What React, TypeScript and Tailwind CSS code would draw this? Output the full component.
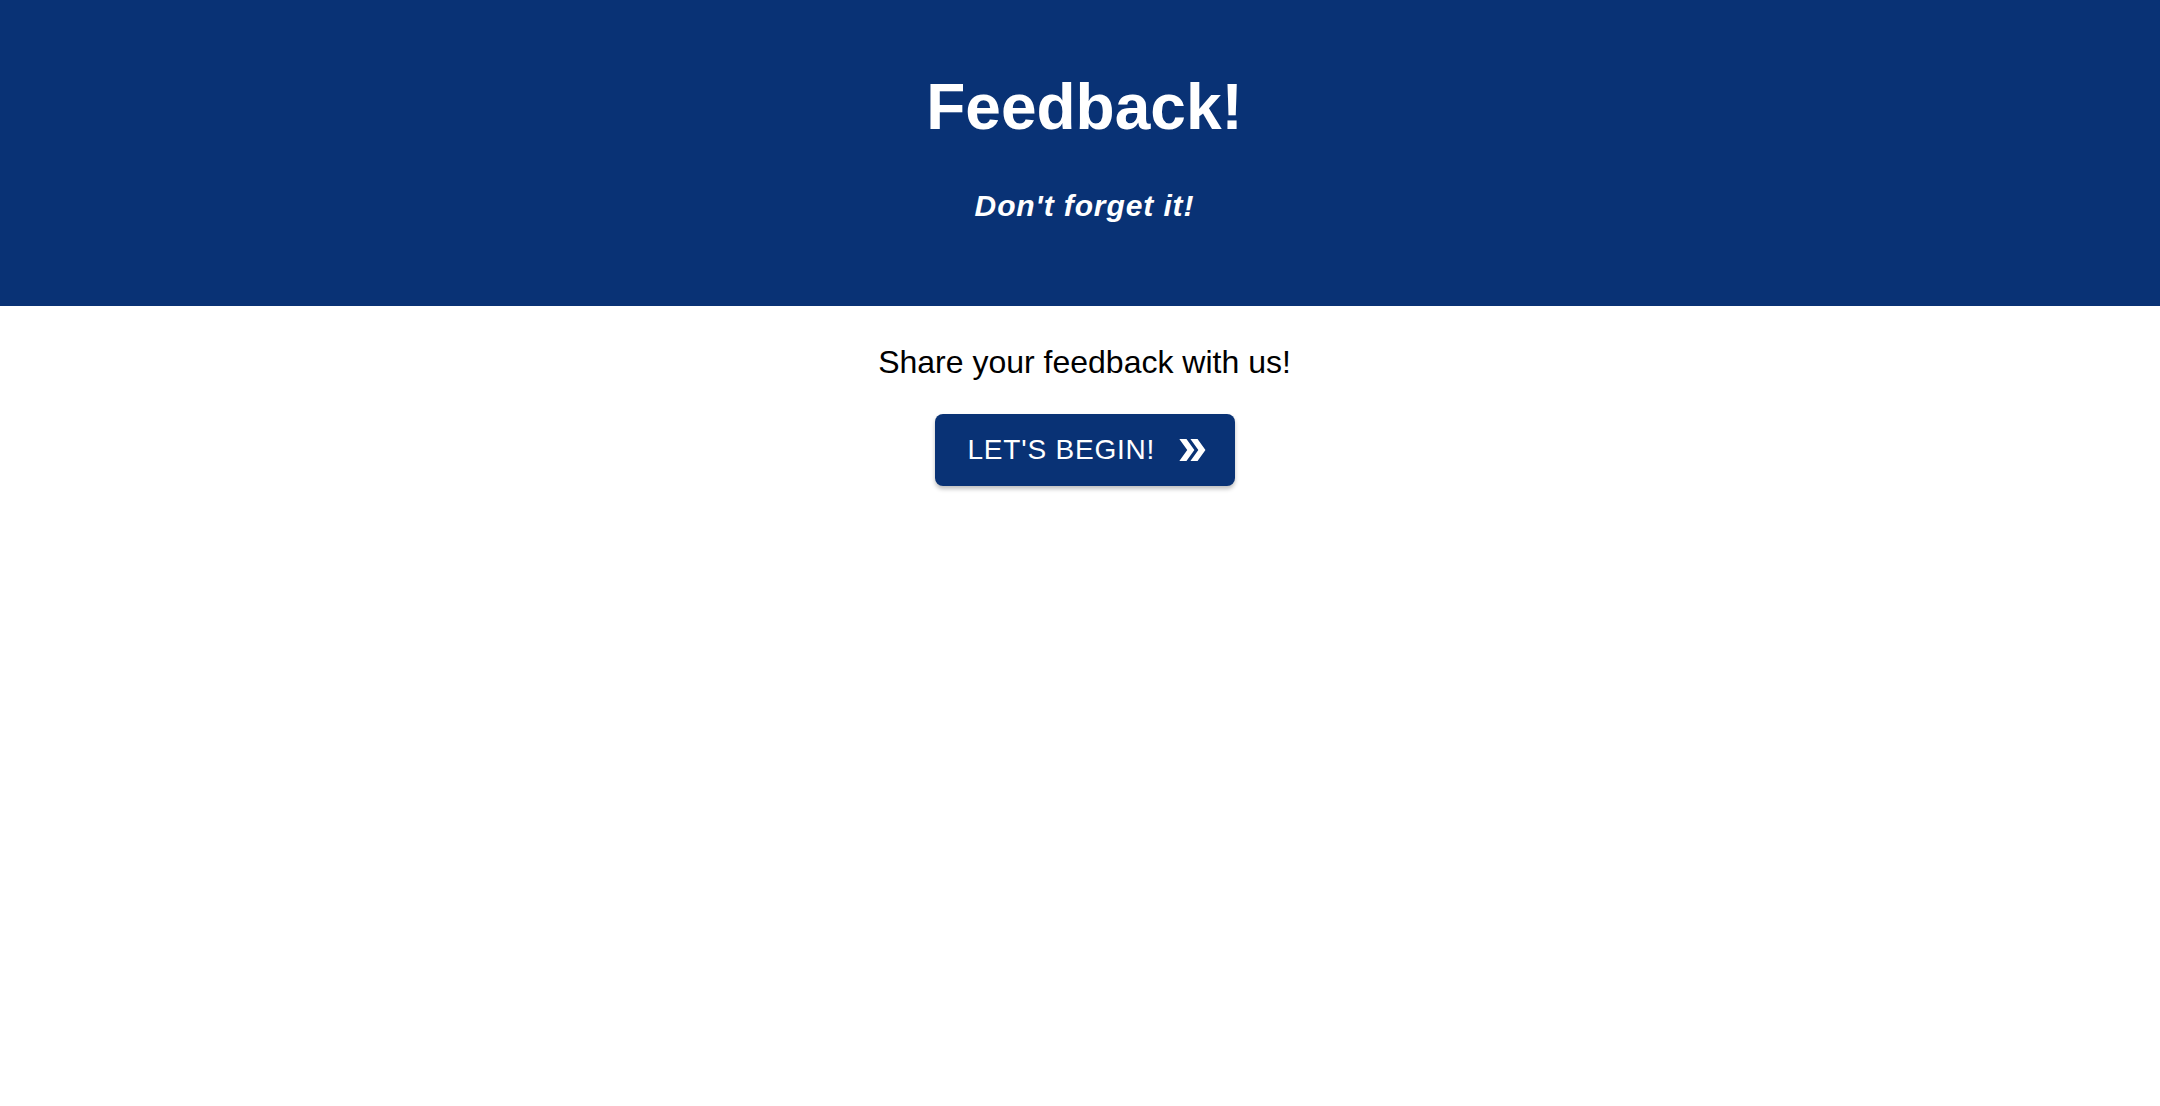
export default function App() {
  return (
    <div className="min-h-screen bg-white font-['Liberation_Sans',Arial,sans-serif]">
      {/* Header */}
      <header className="h-[306px] bg-[#093275] flex flex-col items-center pt-[72px] pl-[9px] text-white">
        <h1 className="text-[64px] leading-[70px] font-bold">Feedback!</h1>
        <h2 className="mt-[47px] text-[30px] leading-[33px] font-bold italic tracking-[0.03em]">Don't forget it!</h2>
      </header>

      {/* Body */}
      <main className="flex flex-col items-center pt-[38px] pl-[9px]">
        <p className="text-[32px] leading-[36px] text-black">Share your feedback with us!</p>
        <button className="mt-[34px] h-[72px] w-[300px] flex items-center pl-[33px] rounded-lg bg-[#093275] text-white text-[28px] uppercase tracking-[0.02857em] shadow-[0_3px_4px_rgba(0,0,0,0.25)]">
          <span>Let's Begin!</span>
          <svg viewBox="0 0 24 24" className="ml-[18px] w-[38px] h-[38px]" fill="currentColor">
            <path d="M15.5 5H11l5 7-5 7h4.5l5-7z" />
            <path d="M8.5 5H4l5 7-5 7h4.5l5-7z" />
          </svg>
        </button>
      </main>
    </div>
  );
}
